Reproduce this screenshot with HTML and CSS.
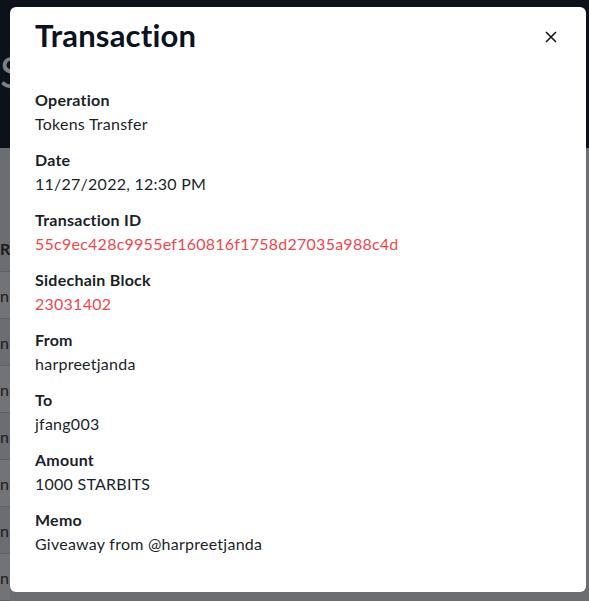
FILE: index.html
```
<!DOCTYPE html>
<html lang="en">
<head>
  <meta charset="UTF-8" />
  <meta name="viewport" content="width=device-width, initial-scale=1.0" />
  <title>Transaction</title>
  <link rel="stylesheet" href="styles.css">
</head>
<body>
  <div class="seite">
    <div class="kopf">
      <h2>S</h2>
    </div>
    <div class="tabelle">
      <div class="zeile titel"><span>R</span></div>
      <div class="zeile"><span>n</span></div>
      <div class="zeile"><span>n</span></div>
      <div class="zeile"><span>n</span></div>
      <div class="zeile"><span>n</span></div>
      <div class="zeile"><span>n</span></div>
      <div class="zeile"><span>n</span></div>
      <div class="zeile"><span>n</span></div>
    </div>
  </div>

  <div class="overlay">
    <div class="modal">
      <div class="modal-kopf">
        <h1>Transaction</h1>
        <button class="schliessen" aria-label="Close">
          <svg width="12" height="12" viewBox="0 0 12 12"><path d="M1 1 L11 11 M11 1 L1 11" stroke="#111" stroke-width="1.5" fill="none"/></svg>
        </button>
      </div>
      <dl class="details">
        <dt>Operation</dt>
        <dd>Tokens Transfer</dd>
        <dt>Date</dt>
        <dd>11/27/2022, 12:30 PM</dd>
        <dt>Transaction ID</dt>
        <dd><a href="#">55c9ec428c9955ef160816f1758d27035a988c4d</a></dd>
        <dt>Sidechain Block</dt>
        <dd><a href="#">23031402</a></dd>
        <dt>From</dt>
        <dd>harpreetjanda</dd>
        <dt>To</dt>
        <dd>jfang003</dd>
        <dt>Amount</dt>
        <dd>1000 STARBITS</dd>
        <dt>Memo</dt>
        <dd>Giveaway from @harpreetjanda</dd>
      </dl>
    </div>
  </div>
</body>
</html>
```
FILE: styles.css
```
body {
  font-family: 'Lato', sans-serif;
  margin: 0;
  background: #6c6d71;
  color: #1b1f2a;
  overflow: hidden;
}
.kopf {
  background: #0d1119;
  height: 148px;
}
.kopf h2 {
  margin: 0;
  padding-top: 48px;
  font-size: 42px;
  font-weight: 400;
  line-height: 48px;
  color: #7d8084;
}
.tabelle {
  margin-top: 91px;
  width: 10px;
}
.zeile {
  height: 46px;
  display: flex;
  align-items: center;
  border-bottom: 1px solid #5f6063;
  font-size: 16px;
  color: #1a1b1e;
}
.zeile:nth-child(even) { background: #727377; }
.zeile.titel {
  height: 32px;
  font-weight: 700;
  align-items: flex-start;
}
.overlay {
  position: fixed;
  inset: 0;
  padding: 7px 3px 0 10px;
}
.modal {
  background: white;
  border-radius: 6px;
  height: 585px;
  padding: 0 25px;
  box-sizing: border-box;
}
.modal-kopf {
  display: flex;
  justify-content: space-between;
  align-items: center;
  height: 56px;
}
.modal-kopf h1 {
  margin: 0;
  font-size: 31px;
  font-weight: 700;
  letter-spacing: 0.2px;
  color: #0c1220;
}
.schliessen {
  background: none;
  border: none;
  padding: 0;
  margin: 4px 4px 0 0;
  display: flex;
  cursor: pointer;
}
.details {
  margin: 25px 0 0 0;
  letter-spacing: 0.25px;
}
.details dt {
  font-weight: 700;
  font-size: 16px;
  line-height: 24px;
}
.details dd {
  margin: 0 0 12px 0;
  font-size: 16px;
  line-height: 24px;
}
.details a {
  color: #f0474c;
  text-decoration: none;
}
```
